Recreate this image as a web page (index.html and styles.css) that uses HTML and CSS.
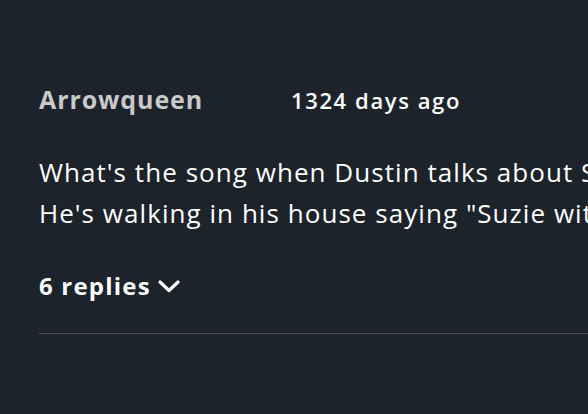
FILE: index.html
```html
<!DOCTYPE html>
<html>
<head>
<meta charset="utf-8">
<link rel="stylesheet" href="styles.css">
</head>
<body>
<div class="comment">
  <div class="meta">
    <span class="author">Arrowqueen</span>
    <span class="time">1324 days ago</span>
  </div>
  <p class="text">What's the song when Dustin talks about Suzie?<br>He's walking in his house saying "Suzie with the radio"</p>
  <div class="replies">
    <span>6 replies</span>
    <svg class="chev" width="22" height="14" viewBox="0 0 22 14"><path d="M2 3 L11 11.5 L20 3" fill="none" stroke="#ffffff" stroke-width="3.2" stroke-linecap="round" stroke-linejoin="round"/></svg>
  </div>
  <div class="rule"></div>
</div>
</body>
</html>
```
FILE: styles.css
```css
html, body {
  margin: 0;
  padding: 0;
  background: #1c232b;
  width: 588px;
  height: 414px;
  overflow: hidden;
}
.comment {
  padding: 82px 0 0 39px;
  font-family: "Open Sans", "Lato", sans-serif;
  color: #ffffff;
}
.meta {
  display: flex;
  align-items: baseline;
  gap: 88px;
  height: 36px;
}
.author {
  font-size: 25px;
  font-weight: 700;
  letter-spacing: 0.9px;
  color: #c9c9c9;
}
.time {
  font-size: 22px;
  font-weight: 600;
  letter-spacing: 1.6px;
}
.text {
  margin: 34px 0 0 0;
  font-size: 26px;
  font-weight: 500;
  letter-spacing: 1.05px;
  line-height: 41px;
  white-space: nowrap;
  width: 549px;
  overflow: hidden;
}
.replies {
  display: flex;
  align-items: center;
  gap: 7px;
  margin-top: 35px;
  font-size: 24px;
  font-weight: 700;
  letter-spacing: 1.2px;
}
.rule {
  margin-top: 31px;
  height: 1px;
  background: #4a4f53;
}
```
